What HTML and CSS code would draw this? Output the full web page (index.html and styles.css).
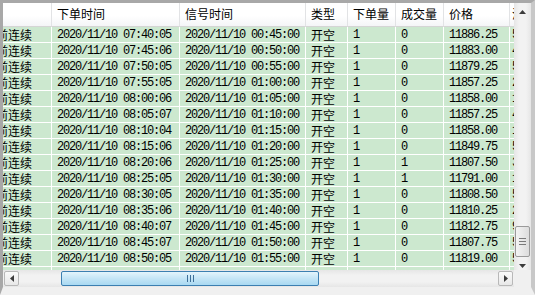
FILE: index.html
```html
<!DOCTYPE html>
<html lang="zh-CN">
<head>
<meta charset="utf-8">
<title>委托记录</title>
<link rel="stylesheet" href="styles.css">
</head>
<body>
<div class="window">
  <div class="viewport">
    <div class="grid">
      <div class="row head">
        <div class="cell"></div>
        <div class="cell">下单时间</div>
        <div class="cell">信号时间</div>
        <div class="cell">类型</div>
        <div class="cell">下单量</div>
        <div class="cell">成交量</div>
        <div class="cell">价格</div>
        <div class="cell">滑点</div>
      </div>
      <div class="row"><div class="cell cn">前连续</div><div class="cell">2020/11/10 07:40:05</div><div class="cell">2020/11/10 00:45:00</div><div class="cell cn">开空</div><div class="cell">1</div><div class="cell">0</div><div class="cell">11886.25</div><div class="cell">5</div></div>
      <div class="row"><div class="cell cn">前连续</div><div class="cell">2020/11/10 07:45:06</div><div class="cell">2020/11/10 00:50:00</div><div class="cell cn">开空</div><div class="cell">1</div><div class="cell">0</div><div class="cell">11883.00</div><div class="cell">4</div></div>
      <div class="row"><div class="cell cn">前连续</div><div class="cell">2020/11/10 07:50:05</div><div class="cell">2020/11/10 00:55:00</div><div class="cell cn">开空</div><div class="cell">1</div><div class="cell">0</div><div class="cell">11879.25</div><div class="cell">5</div></div>
      <div class="row"><div class="cell cn">前连续</div><div class="cell">2020/11/10 07:55:05</div><div class="cell">2020/11/10 01:00:00</div><div class="cell cn">开空</div><div class="cell">1</div><div class="cell">0</div><div class="cell">11857.25</div><div class="cell">2</div></div>
      <div class="row"><div class="cell cn">前连续</div><div class="cell">2020/11/10 08:00:06</div><div class="cell">2020/11/10 01:05:00</div><div class="cell cn">开空</div><div class="cell">1</div><div class="cell">0</div><div class="cell">11858.00</div><div class="cell">1</div></div>
      <div class="row"><div class="cell cn">前连续</div><div class="cell">2020/11/10 08:05:07</div><div class="cell">2020/11/10 01:10:00</div><div class="cell cn">开空</div><div class="cell">1</div><div class="cell">0</div><div class="cell">11857.25</div><div class="cell">4</div></div>
      <div class="row"><div class="cell cn">前连续</div><div class="cell">2020/11/10 08:10:04</div><div class="cell">2020/11/10 01:15:00</div><div class="cell cn">开空</div><div class="cell">1</div><div class="cell">0</div><div class="cell">11858.00</div><div class="cell">1</div></div>
      <div class="row"><div class="cell cn">前连续</div><div class="cell">2020/11/10 08:15:06</div><div class="cell">2020/11/10 01:20:00</div><div class="cell cn">开空</div><div class="cell">1</div><div class="cell">0</div><div class="cell">11849.75</div><div class="cell">5</div></div>
      <div class="row"><div class="cell cn">前连续</div><div class="cell">2020/11/10 08:20:06</div><div class="cell">2020/11/10 01:25:00</div><div class="cell cn">开空</div><div class="cell">1</div><div class="cell">1</div><div class="cell">11807.50</div><div class="cell">3</div></div>
      <div class="row"><div class="cell cn">前连续</div><div class="cell">2020/11/10 08:25:05</div><div class="cell">2020/11/10 01:30:00</div><div class="cell cn">开空</div><div class="cell">1</div><div class="cell">1</div><div class="cell">11791.00</div><div class="cell">1</div></div>
      <div class="row"><div class="cell cn">前连续</div><div class="cell">2020/11/10 08:30:05</div><div class="cell">2020/11/10 01:35:00</div><div class="cell cn">开空</div><div class="cell">1</div><div class="cell">0</div><div class="cell">11808.50</div><div class="cell">5</div></div>
      <div class="row"><div class="cell cn">前连续</div><div class="cell">2020/11/10 08:35:06</div><div class="cell">2020/11/10 01:40:00</div><div class="cell cn">开空</div><div class="cell">1</div><div class="cell">0</div><div class="cell">11810.25</div><div class="cell">2</div></div>
      <div class="row"><div class="cell cn">前连续</div><div class="cell">2020/11/10 08:40:07</div><div class="cell">2020/11/10 01:45:00</div><div class="cell cn">开空</div><div class="cell">1</div><div class="cell">0</div><div class="cell">11812.75</div><div class="cell">9</div></div>
      <div class="row"><div class="cell cn">前连续</div><div class="cell">2020/11/10 08:45:07</div><div class="cell">2020/11/10 01:50:00</div><div class="cell cn">开空</div><div class="cell">1</div><div class="cell">0</div><div class="cell">11807.75</div><div class="cell">5</div></div>
      <div class="row"><div class="cell cn">前连续</div><div class="cell">2020/11/10 08:50:05</div><div class="cell">2020/11/10 01:55:00</div><div class="cell cn">开空</div><div class="cell">1</div><div class="cell">0</div><div class="cell">11819.00</div><div class="cell">5</div></div>
      <div class="row"><div class="cell"></div><div class="cell"></div><div class="cell"></div><div class="cell"></div><div class="cell"></div><div class="cell"></div><div class="cell"></div><div class="cell"></div></div>
    </div>
  </div>
  <div class="vscroll">
    <div class="vbtn">
      <svg width="7" height="4" viewBox="0 0 7 4"><path d="M0 4 L3.5 0 L7 4 Z" fill="#3c3c3c"/></svg>
    </div>
    <div class="vtrack">
      <div class="vthumb">
        <svg width="7" height="7" viewBox="0 0 7 7"><path d="M0 .5H7M0 3.5H7M0 6.5H7" stroke="#7a7a7a" stroke-width="1"/></svg>
      </div>
    </div>
    <div class="vbtn">
      <svg width="7" height="4" viewBox="0 0 7 4"><path d="M0 0 L3.5 4 L7 0 Z" fill="#3c3c3c"/></svg>
    </div>
  </div>
  <div class="hscroll">
    <div class="hbtn">
      <svg width="4" height="7" viewBox="0 0 4 7"><path d="M4 0 L0 3.5 L4 7 Z" fill="#3c3c3c"/></svg>
    </div>
    <div class="htrack">
      <div class="hthumb">
        <svg width="7" height="7" viewBox="0 0 7 7"><path d="M.5 0V7M3.5 0V7M6.5 0V7" stroke="#3d6f99" stroke-width="1"/></svg>
      </div>
    </div>
    <div class="hbtn">
      <svg width="4" height="7" viewBox="0 0 4 7"><path d="M0 0 L4 3.5 L0 7 Z" fill="#3c3c3c"/></svg>
    </div>
  </div>
  <div class="corner"></div>
</div>
</body>
</html>
```

FILE: styles.css
```css
* {
  box-sizing: border-box;
  margin: 0;
  padding: 0;
}

html, body {
  width: 535px;
  height: 295px;
  overflow: hidden;
  background: #f0f0f0;
}

body {
  font-family: "Liberation Mono", "Noto Sans CJK SC", monospace;
  font-size: 12px;
  color: #000;
}

.window {
  width: 535px;
  height: 295px;
  display: grid;
  grid-template-columns: 511px 17px;
  grid-template-rows: 267px 17px;
  border-style: solid;
  border-width: 3px 4px 8px 3px;
  border-color: #a8a8a8 #c8c8c8 #f0f0f0 #a8a8a8;
  background: #f0f0f0;
}

.viewport {
  overflow: hidden;
  background: #fff;
}

.grid {
  margin-left: -12px;
  width: max-content;
}

.row {
  display: grid;
  grid-template-columns: 61px 128px 126px 42px 48px 48px 66px 60px;
  height: 16px;
}

.cell {
  background: #cce8cf;
  border-right: 1px solid #fff;
  border-bottom: 1px solid #fff;
  padding-left: 5px;
  padding-top: 1px;
  line-height: 15px;
  white-space: nowrap;
  overflow: hidden;
  letter-spacing: -1.2px;
}

.cell:last-child {
  padding-left: 2px;
}

.cell.cn {
  font-family: "Noto Sans CJK SC", sans-serif;
  font-size: 12px;
  letter-spacing: 0;
  padding-top: 0;
}

.row.head {
  height: 24px;
}

.head .cell {
  background: linear-gradient(#ffffff, #ffffff 55%, #f4f5f7);
  border-right: 1px solid #e2e3e5;
  border-bottom: 1px solid #d5d5d5;
  font-family: "Noto Sans CJK SC", sans-serif;
  font-size: 12px;
  letter-spacing: 0;
  padding-top: 0;
  line-height: 22px;
}

.vscroll {
  display: flex;
  flex-direction: column;
  background: linear-gradient(90deg, #e6e6e6, #f2f2f2 30%, #f2f2f2 70%, #e6e6e6);
}

.vbtn {
  height: 17px;
  flex: none;
  display: flex;
  align-items: center;
  justify-content: center;
}

.vtrack {
  flex: 1;
  display: flex;
  flex-direction: column;
}

.vthumb {
  margin-top: 206px;
  height: 31px;
  margin-left: 1px;
  margin-right: 1px;
  border: 1px solid #9a9a9a;
  border-radius: 2px;
  background: linear-gradient(90deg, #f4f4f4, #e8e8e8 50%, #dcdcdc);
  display: flex;
  align-items: center;
  justify-content: center;
}

.hscroll {
  display: flex;
  background: linear-gradient(#e6e6e6, #f2f2f2 30%, #f2f2f2 70%, #e6e6e6);
}

.hbtn {
  flex: none;
  width: 15px;
  margin: 1px;
  display: flex;
  align-items: center;
  justify-content: center;
  border: 1px solid #b8b8b8;
  border-radius: 2px;
  background: linear-gradient(#fafafa, #e8e8e8);
}

.htrack {
  flex: 1;
  display: flex;
}

.hthumb {
  margin-left: 41px;
  width: 258px;
  margin-top: 1px;
  margin-bottom: 1px;
  border: 1px solid #3c7fb1;
  border-radius: 2px;
  background: linear-gradient(#e3f4fc, #c4e5f6 50%, #a9d9f2);
  display: flex;
  align-items: center;
  justify-content: center;
}

.corner {
  background: #f0f0f0;
}
```
